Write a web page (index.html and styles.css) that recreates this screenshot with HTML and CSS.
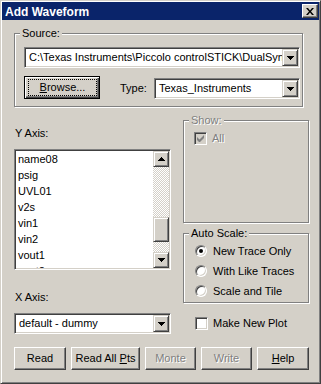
FILE: index.html
```html
<!DOCTYPE html>
<html>
<head>
<meta charset="utf-8">
<title>Add Waveform</title>
<link rel="stylesheet" href="styles.css">
</head>
<body>
<div class="window">
  <div class="titlebar">
    <span class="title">Add Waveform</span>
    <div class="caption-btn"><svg width="8" height="7" viewBox="0 0 8 7"><path d="M0 0h2l2 2.5L6 0h2L5 3.5 8 7H6L4 4.5 2 7H0l3-3.5z" fill="#000"/></svg></div>
  </div>
  <div class="client">
    <div class="group source">
      <span class="legend">Source:</span>
      <div class="combo">
        <div class="combo-text">C:\Texas Instruments\Piccolo controlSTICK\DualSyn</div>
        <div class="combo-btn"><svg width="7" height="4" viewBox="0 0 7 4"><path d="M0 0h7v1H0zM1 1h5v1H1zM2 2h3v1H2zM3 3h1v1H3z" fill="#000"/></svg></div>
      </div>
      <div class="source-row">
        <div class="btn default"><span class="focus"><u>B</u>rowse...</span></div>
        <span class="type-label">Type:</span>
        <div class="combo type">
          <div class="combo-text">Texas_Instruments</div>
          <div class="combo-btn"><svg width="7" height="4" viewBox="0 0 7 4"><path d="M0 0h7v1H0zM1 1h5v1H1zM2 2h3v1H2zM3 3h1v1H3z" fill="#000"/></svg></div>
        </div>
      </div>
    </div>
    <div class="middle">
      <div class="left-col">
        <div class="label y-label">Y Axis:</div>
        <div class="listbox">
          <div class="items">
            <div class="item">name08</div>
            <div class="item">psig</div>
            <div class="item">UVL01</div>
            <div class="item">v2s</div>
            <div class="item">vin1</div>
            <div class="item">vin2</div>
            <div class="item">vout1</div>
            <div class="item">vout2</div>
          </div>
          <div class="vscroll">
            <div class="sb-btn"><svg width="7" height="4" viewBox="0 0 7 4"><path d="M3 0h1v1H3zM2 1h3v1H2zM1 2h5v1H1zM0 3h7v1H0z" fill="#000"/></svg></div>
            <div class="track"><div class="thumb"></div></div>
            <div class="sb-btn"><svg width="7" height="4" viewBox="0 0 7 4"><path d="M0 0h7v1H0zM1 1h5v1H1zM2 2h3v1H2zM3 3h1v1H3z" fill="#000"/></svg></div>
          </div>
        </div>
        <div class="label x-label">X Axis:</div>
        <div class="combo xaxis">
          <div class="combo-text">default - dummy</div>
          <div class="combo-btn"><svg width="7" height="4" viewBox="0 0 7 4"><path d="M0 0h7v1H0zM1 1h5v1H1zM2 2h3v1H2zM3 3h1v1H3z" fill="#000"/></svg></div>
        </div>
      </div>
      <div class="right-col">
        <div class="group show">
          <span class="legend disabled-text">Show:</span>
          <div class="check-row">
            <div class="checkbox disabled"><svg width="7" height="7" viewBox="0 0 7 7"><path d="M0 2L2.5 4.5 7 0V3L2.5 7.5 0 5z" fill="#808080"/></svg></div>
            <span class="check-label disabled-text">All</span>
          </div>
        </div>
        <div class="group autoscale">
          <span class="legend">Auto Scale:</span>
          <div class="radio-row"><span class="radio checked"></span><span class="radio-label">New Trace Only</span></div>
          <div class="radio-row"><span class="radio"></span><span class="radio-label">With Like Traces</span></div>
          <div class="radio-row"><span class="radio"></span><span class="radio-label">Scale and Tile</span></div>
        </div>
        <div class="check-row newplot">
          <div class="checkbox"></div>
          <span class="check-label">Make New Plot</span>
        </div>
      </div>
    </div>
    <div class="buttons">
      <div class="btn w-read">Read</div>
      <div class="btn w-readall">Read All <u>P</u>ts</div>
      <div class="btn w-monte disabled-text">Monte</div>
      <div class="btn w-write disabled-text">Write</div>
      <div class="btn w-help"><u>H</u>elp</div>
    </div>
  </div>
</div>
</body>
</html>
```

FILE: styles.css
```css
* { box-sizing: border-box; }
html, body { margin: 0; padding: 0; }
body {
  background: #d4d0c8;
  font-family: "Liberation Sans", Arial, sans-serif;
  font-size: 11px;
  line-height: 13px;
  color: #000;
}
.window {
  width: 321px;
  height: 384px;
  background: #d4d0c8;
  border: 1px solid;
  border-color: #d4d0c8 #404040 #404040 #d4d0c8;
  box-shadow: inset 1px 1px 0 #fff, inset -1px -1px 0 #808080;
  padding: 1px;
  display: flex;
  flex-direction: column;
  overflow: hidden;
}
.titlebar {
  height: 18px;
  flex: none;
  background: #0a246a;
  display: flex;
  align-items: center;
  padding-left: 3px;
}
.title {
  color: #fff;
  font-weight: bold;
  font-size: 12px;
  line-height: 18px;
  padding-top: 1px;
}
.caption-btn {
  margin-left: auto;
  margin-right: 1px;
  width: 16px;
  height: 14px;
  background: #d4d0c8;
  border: 1px solid;
  border-color: #fff #404040 #404040 #fff;
  box-shadow: inset -1px -1px 0 #808080, inset 1px 1px 0 #d4d0c8;
  display: flex;
  align-items: center;
  justify-content: center;
}
.client {
  flex: 1;
  padding-left: 12px;
  display: flex;
  flex-direction: column;
}
.group {
  position: relative;
  border: 1px solid #808080;
  box-shadow: inset 1px 1px 0 #fff, 1px 1px 0 #fff;
}
.legend {
  position: absolute;
  top: -7px;
  left: 5px;
  padding: 0 2px;
  background: #d4d0c8;
  line-height: 13px;
  white-space: nowrap;
}
.disabled-text {
  color: #808080;
  text-shadow: 1px 1px 0 #fff;
}
.source {
  margin-top: 13px;
  width: 289px;
  height: 74px;
  padding: 13px 2px 7px 9px;
}
.combo {
  height: 21px;
  display: flex;
  background: #fff;
  border: 1px solid;
  border-color: #808080 #fff #fff #808080;
  box-shadow: inset 1px 1px 0 #404040, inset -1px -1px 0 #d4d0c8;
  padding: 1px;
}
.combo-text {
  flex: 1;
  min-width: 0;
  overflow: hidden;
  white-space: nowrap;
  padding-left: 3px;
  line-height: 17px;
}
.combo-btn, .sb-btn {
  flex: none;
  width: 16px;
  height: 17px;
  background: #d4d0c8;
  border: 1px solid;
  border-color: #d4d0c8 #404040 #404040 #d4d0c8;
  box-shadow: inset 1px 1px 0 #fff, inset -1px -1px 0 #808080;
  display: flex;
  align-items: center;
  justify-content: center;
}
.source-row {
  margin-top: 8px;
  display: flex;
  align-items: flex-end;
}
.btn {
  height: 23px;
  flex: none;
  background: #d4d0c8;
  border: 1px solid;
  border-color: #fff #404040 #404040 #fff;
  box-shadow: inset -1px -1px 0 #808080, inset 1px 1px 0 #d4d0c8;
  text-align: center;
  line-height: 21px;
  white-space: nowrap;
}
.btn.default {
  width: 76px;
  border-color: #000;
  box-shadow: inset 1px 1px 0 #fff, inset -1px -1px 0 #404040, inset -2px -2px 0 #808080;
  padding: 2px 2px 2px 3px;
}
.focus {
  display: block;
  height: 100%;
  border: 1px dotted #000;
  line-height: 15px;
}
.type-label {
  flex: none;
  width: 34px;
  margin-left: 20px;
  line-height: 21px;
}
.combo.type { flex: 1; }
.middle { display: flex; }
.left-col {
  width: 157px;
  flex: none;
  display: flex;
  flex-direction: column;
}
.label {
  height: 13px;
  line-height: 13px;
  padding-left: 1px;
}
.y-label { margin-top: 20px; }
.listbox {
  margin-top: 9px;
  height: 121px;
  display: flex;
  background: #fff;
  border: 1px solid;
  border-color: #808080 #fff #fff #808080;
  box-shadow: inset 1px 1px 0 #404040, inset -1px -1px 0 #d4d0c8;
  padding: 1px;
}
.items {
  flex: 1;
  overflow: hidden;
  padding-left: 2px;
}
.item {
  height: 16px;
  line-height: 16px;
  white-space: nowrap;
}
.vscroll {
  width: 16px;
  flex: none;
  display: flex;
  flex-direction: column;
}
.sb-btn { height: 16px; }
.track {
  flex: 1;
  background-color: #fff;
  background-image: repeating-conic-gradient(#d4d0c8 0 25%, #fff 0 50%);
  background-size: 2px 2px;
}
.thumb {
  margin-top: 50px;
  height: 25px;
  background: #d4d0c8;
  border: 1px solid;
  border-color: #d4d0c8 #404040 #404040 #d4d0c8;
  box-shadow: inset 1px 1px 0 #fff, inset -1px -1px 0 #808080;
}
.x-label { margin-top: 21px; }
.combo.xaxis { margin-top: 9px; }
.right-col {
  margin-left: 12px;
  width: 126px;
  flex: none;
  display: flex;
  flex-direction: column;
}
.show {
  margin-top: 13px;
  height: 103px;
  padding: 11px 0 0 10px;
}
.autoscale {
  margin-top: 10px;
  height: 70px;
  padding: 7px 0 0 11px;
}
.check-row {
  display: flex;
  align-items: center;
  height: 13px;
}
.checkbox {
  width: 13px;
  height: 13px;
  flex: none;
  background: #fff;
  border: 1px solid;
  border-color: #808080 #fff #fff #808080;
  box-shadow: inset 1px 1px 0 #404040, inset -1px -1px 0 #d4d0c8;
  display: flex;
  align-items: center;
  justify-content: center;
}
.checkbox.disabled { background: #d4d0c8; }
.check-label {
  margin-left: 5px;
  white-space: nowrap;
}
.radio-row {
  display: flex;
  align-items: center;
  height: 20px;
}
.radio {
  width: 12px;
  height: 12px;
  flex: none;
  border-radius: 50%;
  background: #fff;
  border: 1px solid;
  border-color: #808080 #fff #fff #808080;
  box-shadow: inset 1px 1px 0 #404040, inset -1px -1px 0 #d4d0c8;
  display: flex;
  align-items: center;
  justify-content: center;
}
.radio.checked::after {
  content: "";
  width: 4px;
  height: 4px;
  border-radius: 50%;
  background: #000;
}
.radio-label {
  margin-left: 6px;
  white-space: nowrap;
}
.newplot {
  margin-top: 14px;
  margin-left: 12px;
}
.buttons {
  margin-top: 13px;
  display: flex;
  gap: 5px;
}
.w-read { width: 52px; }
.w-readall { width: 69px; }
.w-monte { width: 51px; }
.w-write { width: 51px; }
.w-help { width: 52px; }
```
